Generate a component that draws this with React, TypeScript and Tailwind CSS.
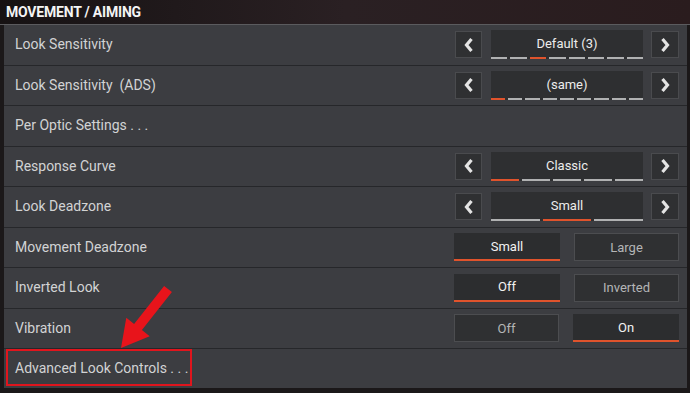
import React from "react";

const font = { fontFamily: "Roboto, 'Liberation Sans', sans-serif" };

function Chevron({ dir }: { dir: "left" | "right" }) {
  return (
    <svg width="12" height="16" viewBox="0 0 12 16">
      {dir === "left" ? (
        <polyline points="8.5,2 3.5,8 8.5,14" fill="none" stroke="#e4e4e4" strokeWidth="3.2" strokeLinejoin="miter" />
      ) : (
        <polyline points="3.5,2 8.5,8 3.5,14" fill="none" stroke="#e4e4e4" strokeWidth="3.2" strokeLinejoin="miter" />
      )}
    </svg>
  );
}

function Slider({ value, count, active }: { value: string; count: number; active: number }) {
  return (
    <div className="flex items-center">
      <div className="flex h-[27px] w-[27px] items-center justify-center border border-[#4a4b4e] bg-[#2f3032]">
        <Chevron dir="left" />
      </div>
      <div className="ml-[9px] flex h-[29px] w-[152px] flex-col bg-[#2e2f31]">
        <div className="flex flex-1 items-center justify-center text-[13px] text-[#ececec]">{value}</div>
        <div className="flex gap-[3px]">
          {Array.from({ length: count }).map((_, i) => (
            <div key={i} className={i === active ? "h-[2px] flex-1 bg-[#e0532c]" : "h-[2px] flex-1 bg-[#b0b1b2]"} />
          ))}
        </div>
      </div>
      <div className="ml-[8px] flex h-[27px] w-[28px] items-center justify-center border border-[#4a4b4e] bg-[#2f3032]">
        <Chevron dir="right" />
      </div>
    </div>
  );
}

function Toggle({ options, active }: { options: string[]; active: number }) {
  return (
    <div className="flex gap-[14px]">
      {options.map((o, i) => (
        <div
          key={o}
          className={
            i === active
              ? "flex h-[28px] w-[106px] items-center justify-center border-b-2 border-[#e0532c] bg-[#2c2d2f] text-[13px] text-[#f2f2f2]"
              : "flex h-[28px] w-[105px] items-center justify-center border border-[#4c4d50] bg-[#2f3032] text-[13px] text-[#b4b5b6]"
          }
        >
          {o}
        </div>
      ))}
    </div>
  );
}

function Row({ label, children, last }: { label: string; children?: React.ReactNode; last?: boolean }) {
  return (
    <div className={last ? "relative flex h-[39px] items-center justify-between pl-[11px] pr-[8px]" : "flex h-[40.5px] items-center justify-between border-b border-[#26272a] pl-[11px] pr-[8px]"}>
      <span className="whitespace-pre text-[14px] text-[#d2d3d4]">{label}</span>
      {children}
      {last && <div className="absolute left-[2px] top-0 h-[37px] w-[186px] border-2 border-[#e0151d]" />}
    </div>
  );
}

export default function App() {
  return (
    <div className="relative h-[393px] w-[690px] overflow-hidden bg-[#1b1819]" style={font}>
      <div className="flex h-[24px] items-center bg-gradient-to-r from-[#161213] via-[#2a2023] to-[#2a1c1e] pl-[6px]">
        <span className="text-[14px] font-bold tracking-[-0.2px] text-[#f4f4f4]">MOVEMENT / AIMING</span>
      </div>
      <div className="h-px bg-[#5b5b5e]" />
      <div className="ml-[4px] mr-[3px] bg-[#3c3d41]">
        <Row label="Look Sensitivity">
          <Slider value="Default (3)" count={8} active={2} />
        </Row>
        <Row label="Look Sensitivity  (ADS)">
          <Slider value="(same)" count={9} active={0} />
        </Row>
        <Row label="Per Optic Settings . . ." />
        <Row label="Response Curve">
          <Slider value="Classic" count={5} active={0} />
        </Row>
        <Row label="Look Deadzone">
          <Slider value="Small" count={3} active={1} />
        </Row>
        <Row label="Movement Deadzone">
          <Toggle options={["Small", "Large"]} active={0} />
        </Row>
        <Row label="Inverted Look">
          <Toggle options={["Off", "Inverted"]} active={0} />
        </Row>
        <Row label="Vibration">
          <Toggle options={["Off", "On"]} active={1} />
        </Row>
        <Row label="Advanced Look Controls . . ." last />
      </div>
      <svg className="absolute left-0 top-0" width="690" height="393">
        <polygon
          points="121,348 126.3,317.7 134.1,323.9 164.1,285.9 171.9,292.1 141.9,330.1 149.7,336.3"
          fill="#e8141b"
        />
      </svg>
    </div>
  );
}
